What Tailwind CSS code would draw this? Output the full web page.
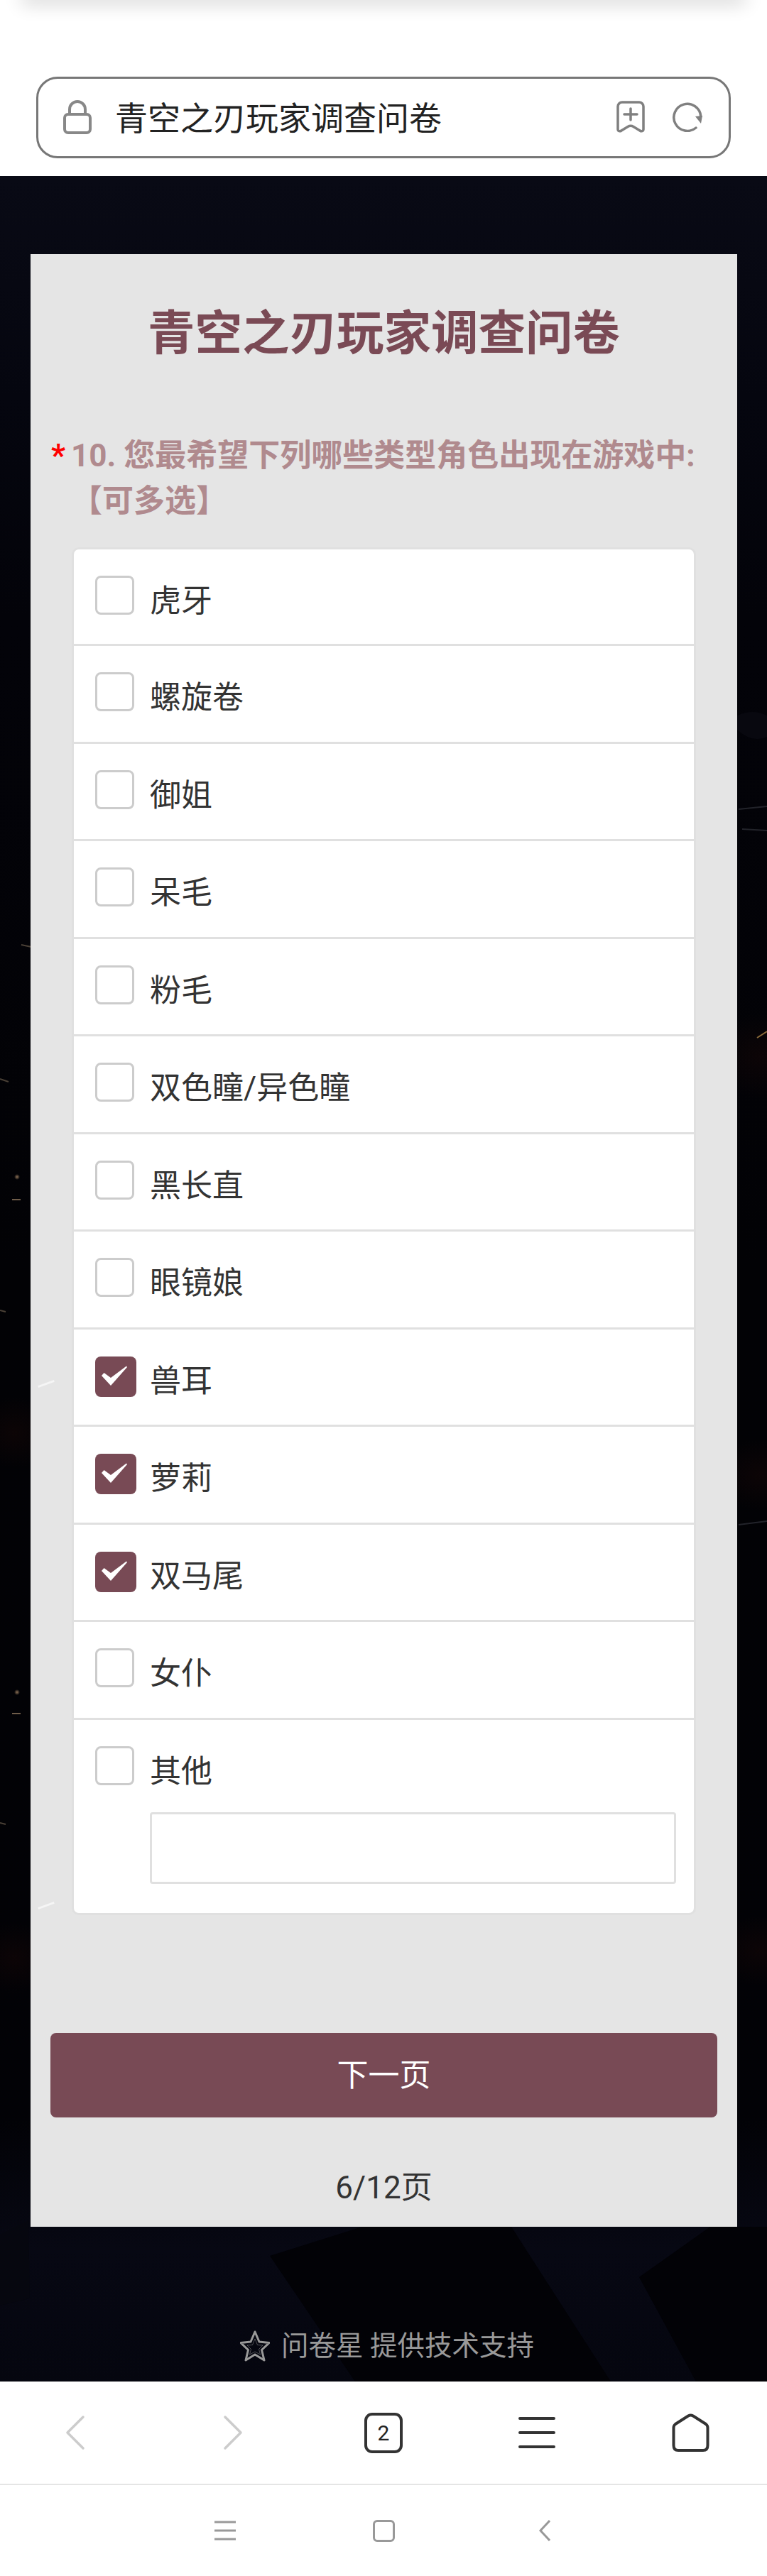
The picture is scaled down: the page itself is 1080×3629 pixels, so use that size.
<!DOCTYPE html>
<html lang="zh-CN">
<head>
<meta charset="utf-8">
<script src="https://cdn.jsdelivr.net/npm/@tailwindcss/browser@4"></script>
<title>青空之刃玩家调查问卷</title>
</head>
<body class="m-0 w-[1080px] h-[3629px] overflow-hidden bg-white font-['Roboto','Noto_Sans_CJK_SC',sans-serif] text-[#333]">

<!-- address bar -->
<header class="relative h-[248px] pt-[108px] px-[51px] bg-white overflow-hidden">
  <div class="absolute -top-[20px] left-[30px] right-[30px] h-[20px] shadow-[0_6px_26px_rgba(0,0,0,0.16)]"></div>
  <div class="flex items-center h-[115px] border-[3px] border-[#777] rounded-[30px] pl-[35px] pr-[37px]">
    <svg class="w-[40px] h-[48px] shrink-0 -mt-[2px]" viewBox="0 0 40 48" fill="none" stroke="#888" stroke-width="4"><rect x="2" y="20" width="36" height="26" rx="5"/><path d="M9 20V13a11 11 0 0 1 22 0V20"/></svg>
    <span class="ml-[33px] text-[46px] leading-[60px] text-[#222] flex-1 mt-[2px]">青空之刃玩家调查问卷</span>
    <svg class="w-[40px] h-[45px] shrink-0 -mt-[2px]" viewBox="0 0 40 45" fill="none" stroke="#808080" stroke-width="3.5" stroke-linecap="round"><path d="M2 8a6 6 0 0 1 6-6H32a6 6 0 0 1 6 6V40c0 3-3 3.500-5 2L24 36.500c-2.500-1.500-5.500-1.500-8 0L7 42c-2 1.500-5 1-5-2Z"/><path d="M20 11V27M11 19H29"/></svg>
    <svg class="w-[42px] h-[42px] shrink-0 ml-[39px] -mt-[2px]" viewBox="0 0 42 42" fill="none"><path d="M39.800 20A19 19 0 1 0 33 36" stroke="#808080" stroke-width="3.5" stroke-linecap="round"/><path d="M32 20L42 19L40 30Z" fill="#808080"/></svg>
  </div>
</header>

<!-- page -->
<main class="relative h-[3107px] bg-[#05060f] overflow-hidden">
  <!-- artwork behind the card -->
  <svg class="absolute inset-0 w-[1080px] h-[3107px]" viewBox="0 0 1080 3107" aria-hidden="true">
    <defs>
      <linearGradient id="lg" x1="0" y1="0" x2="0" y2="1">
        <stop offset="0" stop-color="#090a15"/><stop offset="0.1" stop-color="#05060f"/><stop offset="0.2" stop-color="#030309"/><stop offset="0.5" stop-color="#020205"/><stop offset="0.88" stop-color="#020206"/><stop offset="0.94" stop-color="#070813"/><stop offset="1" stop-color="#05060f"/>
      </linearGradient>
      <radialGradient id="rd"><stop offset="0" stop-color="#2a0c08" stop-opacity=".25"/><stop offset="1" stop-color="#2a0c08" stop-opacity="0"/></radialGradient>
      <radialGradient id="dot"><stop offset="0" stop-color="#c9a27a"/><stop offset="1" stop-color="#c9a27a" stop-opacity="0"/></radialGradient>
    </defs>
    <rect width="1080" height="3107" fill="url(#lg)"/>
    <ellipse cx="20" cy="1770" rx="60" ry="50" fill="url(#rd)"/>
    <ellipse cx="20" cy="2510" rx="60" ry="50" fill="url(#rd)"/>
    <ellipse cx="1070" cy="1240" rx="70" ry="60" fill="url(#rd)"/>
    <ellipse cx="1070" cy="1830" rx="70" ry="50" fill="url(#rd)"/>
    <ellipse cx="1070" cy="2500" rx="70" ry="50" fill="url(#rd)"/>
    <path d="M1038 780Q1060 800 1080 790L1080 760Q1060 750 1038 760Z" fill="#08080f"/>
    <path d="M1040 892L1080 888M1045 920L1080 922M1040 1900L1080 1895" stroke="#22232a" stroke-width="2" fill="none"/>
    <path d="M1066 1214L1080 1205" stroke="#8a6a3a" stroke-width="2"/>
    <path d="M30 1083L44 1086M0 1272L12 1276M0 1598L8 1600M0 2320L8 2322" stroke="#4a4036" stroke-width="2"/>
    <circle cx="24" cy="1410" r="4" fill="url(#dot)" opacity=".7"/><path d="M17 1442H29" stroke="#6e5c49" stroke-width="2"/>
    <circle cx="24" cy="2136" r="4" fill="url(#dot)" opacity=".7"/><path d="M17 2166H29" stroke="#6e5c49" stroke-width="2"/>
    <path d="M0 2900L40 2880L42 2990L0 3000Z" fill="#06070f"/>
    <path d="M380 2930L510 2889L720 2889L860 3107L500 3107Z" fill="#020206"/>
    <path d="M900 2960L1000 2889L1080 2889L1080 3107L980 3107Z" fill="#020206"/>
  </svg>

  <!-- card -->
  <section class="relative ml-[43px] mt-[110px] w-[995px] h-[2779px] bg-[#e5e5e5] pt-[70px]">
    <span class="absolute left-[10px] top-[1590px] w-[24px] h-[3px] bg-white/60 -rotate-[20deg]"></span>
    <span class="absolute left-[10px] top-[2325px] w-[24px] h-[3px] bg-white/60 -rotate-[20deg]"></span>
    <h1 class="text-center text-[66.5px] leading-[84px] font-bold text-[#7a4a55]">青空之刃玩家调查问卷</h1>

    <div class="flex mt-[98px] pl-[29px] text-[44px] leading-[64px] font-bold">
      <span class="w-[28px] shrink-0 text-[#f00]">*</span>
      <p class="w-[900px] text-[#b08a8e]">10. 您最希望下列哪些类型角色出现在游戏中:<br>【可多选】</p>
    </div>

    <ul class="ml-[58px] mt-[33px] w-[879px] h-[1927px] bg-white border-[3px] border-[#e0e0e0] rounded-[10px] text-[44px] leading-[54px]">
      <li class="flex h-[136px] border-b-[3px] border-[#e0e0e0] pl-[30px] pt-[37px]"><span class="w-[55px] h-[55px] shrink-0 border-[3px] border-[#ccc] rounded-[8px]"></span><span class="ml-[22px] mt-[9px]">虎牙</span></li>
      <li class="flex h-[137.5px] border-b-[3px] border-[#e0e0e0] pl-[30px] pt-[37px]"><span class="w-[55px] h-[55px] shrink-0 border-[3px] border-[#ccc] rounded-[8px]"></span><span class="ml-[22px] mt-[9px]">螺旋卷</span></li>
      <li class="flex h-[137.5px] border-b-[3px] border-[#e0e0e0] pl-[30px] pt-[37px]"><span class="w-[55px] h-[55px] shrink-0 border-[3px] border-[#ccc] rounded-[8px]"></span><span class="ml-[22px] mt-[9px]">御姐</span></li>
      <li class="flex h-[137.5px] border-b-[3px] border-[#e0e0e0] pl-[30px] pt-[37px]"><span class="w-[55px] h-[55px] shrink-0 border-[3px] border-[#ccc] rounded-[8px]"></span><span class="ml-[22px] mt-[9px]">呆毛</span></li>
      <li class="flex h-[137.5px] border-b-[3px] border-[#e0e0e0] pl-[30px] pt-[37px]"><span class="w-[55px] h-[55px] shrink-0 border-[3px] border-[#ccc] rounded-[8px]"></span><span class="ml-[22px] mt-[9px]">粉毛</span></li>
      <li class="flex h-[137.5px] border-b-[3px] border-[#e0e0e0] pl-[30px] pt-[37px]"><span class="w-[55px] h-[55px] shrink-0 border-[3px] border-[#ccc] rounded-[8px]"></span><span class="ml-[22px] mt-[9px]">双色瞳/异色瞳</span></li>
      <li class="flex h-[137.5px] border-b-[3px] border-[#e0e0e0] pl-[30px] pt-[37px]"><span class="w-[55px] h-[55px] shrink-0 border-[3px] border-[#ccc] rounded-[8px]"></span><span class="ml-[22px] mt-[9px]">黑长直</span></li>
      <li class="flex h-[137.5px] border-b-[3px] border-[#e0e0e0] pl-[30px] pt-[37px]"><span class="w-[55px] h-[55px] shrink-0 border-[3px] border-[#ccc] rounded-[8px]"></span><span class="ml-[22px] mt-[9px]">眼镜娘</span></li>
      <li class="flex h-[137.5px] border-b-[3px] border-[#e0e0e0] pl-[30px] pt-[38px]"><svg class="w-[58px] h-[57px] shrink-0" viewBox="0 0 58 57"><rect width="58" height="57" rx="8" fill="#784a55"/><path d="M9 27L12.500 23L22 30L44 13.500L45 15L22 41Z" fill="#fff"/></svg><span class="ml-[19px] mt-[8px]">兽耳</span></li>
      <li class="flex h-[137.5px] border-b-[3px] border-[#e0e0e0] pl-[30px] pt-[38px]"><svg class="w-[58px] h-[57px] shrink-0" viewBox="0 0 58 57"><rect width="58" height="57" rx="8" fill="#784a55"/><path d="M9 27L12.500 23L22 30L44 13.500L45 15L22 41Z" fill="#fff"/></svg><span class="ml-[19px] mt-[8px]">萝莉</span></li>
      <li class="flex h-[137.5px] border-b-[3px] border-[#e0e0e0] pl-[30px] pt-[38px]"><svg class="w-[58px] h-[57px] shrink-0" viewBox="0 0 58 57"><rect width="58" height="57" rx="8" fill="#784a55"/><path d="M9 27L12.500 23L22 30L44 13.500L45 15L22 41Z" fill="#fff"/></svg><span class="ml-[19px] mt-[8px]">双马尾</span></li>
      <li class="flex h-[137.5px] border-b-[3px] border-[#e0e0e0] pl-[30px] pt-[37px]"><span class="w-[55px] h-[55px] shrink-0 border-[3px] border-[#ccc] rounded-[8px]"></span><span class="ml-[22px] mt-[9px]">女仆</span></li>
      <li class="pl-[30px] pt-[37px]">
        <div class="flex"><span class="w-[55px] h-[55px] shrink-0 border-[3px] border-[#ccc] rounded-[8px]"></span><span class="ml-[22px] mt-[9px]">其他</span></div>
        <div class="ml-[77px] mt-[30px] w-[741px] h-[101px] border-[3px] border-[#e0e0e0] rounded-[4px] bg-white"></div>
      </li>
    </ul>

    <button class="block ml-[28px] mt-[166px] w-[939px] h-[119px] rounded-[8px] bg-[#784a55] text-white text-[44px] leading-[54px]">下一页</button>
    <p class="mt-[72px] text-center text-[44px] leading-[54px] text-[#333]">6/12页</p>
  </section>

  <!-- support line -->
  <div class="relative mt-[141px] pl-[10px] flex items-center justify-center h-[54px] text-[38.5px] text-[#999]">
    <svg class="w-[42px] h-[44px] mr-[16px]" viewBox="0 0 42 44" fill="none" stroke="#999" stroke-linejoin="round"><path d="M21 2L27 16L41 17.500L30.500 27.500L34 42L21 34L8 42L11.500 27.500L1 17.500L15 16Z" stroke-width="3"/><path d="M21 12L24.500 20.500L32 21L26.500 26.500L28.500 34L21 30L13.500 34L15.500 26.500L10 21L17.500 20.500Z" stroke-width="1" opacity=".5"/></svg>
    <span>问卷星 提供技术支持</span>
  </div>
</main>

<!-- browser toolbar -->
<nav class="grid grid-cols-5 items-center h-[144px] bg-white">
  <div class="flex justify-center"><svg class="w-[30px] h-[50px] -ml-[5px]" viewBox="0 0 30 50" fill="none" stroke="#ccc" stroke-width="3.500" stroke-linecap="round" stroke-linejoin="round"><path d="M26 3L4 25L26 47"/></svg></div>
  <div class="flex justify-center"><svg class="w-[30px] h-[50px] ml-[7px]" viewBox="0 0 30 50" fill="none" stroke="#ccc" stroke-width="3.500" stroke-linecap="round" stroke-linejoin="round"><path d="M4 3L26 25L4 47"/></svg></div>
  <div class="flex justify-center"><span class="flex items-center justify-center w-[54px] h-[57px] border-[4px] border-[#333] rounded-[11px] text-[30px] text-[#222]">2</span></div>
  <div class="flex justify-center"><svg class="w-[52px] h-[44px]" viewBox="0 0 52 44" stroke="#333" stroke-width="4" stroke-linecap="round"><path d="M2 2H50M2 22H50M2 42H50"/></svg></div>
  <div class="flex justify-center"><svg class="w-[53px] h-[54px]" viewBox="0 0 53 54" fill="none" stroke="#333" stroke-width="4" stroke-linejoin="round"><path d="M2.500 20Q2.500 17 5 15L23 3.500Q26.500 1.500 30 3.500L48 15Q50.500 17 50.500 20V45Q50.500 52 44 52H9Q2.500 52 2.500 45Z"/></svg></div>
</nav>

<!-- system navigation -->
<footer class="flex items-center h-[130px] border-t-[2px] border-[#e5e5e5] bg-white pl-[302px]">
  <svg class="w-[30px] h-[28px]" viewBox="0 0 30 28" stroke="#999" stroke-width="3"><path d="M0 2H30M0 14H30M0 26H30"/></svg>
  <span class="ml-[193px] w-[31px] h-[31px] border-[3px] border-[#999] rounded-[6px]"></span>
  <svg class="ml-[203px] w-[16px] h-[30px]" viewBox="0 0 16 30" fill="none" stroke="#999" stroke-width="3"><path d="M15 1L2 15L15 29"/></svg>
</footer>

</body>
</html>
